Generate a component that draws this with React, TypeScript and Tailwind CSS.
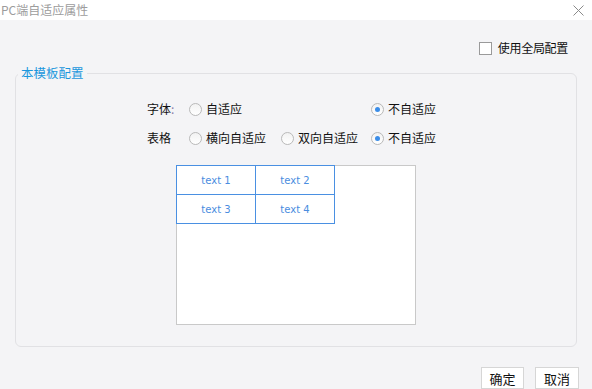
import React from "react";

const font = { fontFamily: '"Noto Sans CJK SC", "Liberation Sans", sans-serif' };

function Radio({ checked, label }: { checked?: boolean; label: string }) {
  return (
    <div className="flex items-center h-5">
      <span className="w-[13px] h-[13px] rounded-full border border-[#b9b9b9] bg-gradient-to-b from-[#f2f2f2] to-white flex items-center justify-center">
        {checked && <span className="w-[5px] h-[5px] rounded-full bg-[#3b8de8]" />}
      </span>
      <span className="ml-[4px] text-[12px] text-[#111] leading-none">{label}</span>
    </div>
  );
}

export default function App() {
  return (
    <div className="w-[592px] h-[389px] bg-[#f4f4f6] flex flex-col overflow-hidden" style={font}>
      <div className="h-5 bg-white flex items-center justify-between pl-[1px] pr-[8px]">
        <span className="text-[12px] text-[#9c9c9c] leading-none">PC端自适应属性</span>
        <svg width="11" height="11" viewBox="0 0 11 11" className="mt-[1px]">
          <path d="M0.5 0.5L10.5 10.5M10.5 0.5L0.5 10.5" stroke="#8a8a8a" strokeWidth="1" />
        </svg>
      </div>

      <div className="flex justify-end pr-[24px] mt-[20px] h-4 items-center">
        <span className="w-[13px] h-[13px] border border-[#9a9a9a] bg-white" />
        <span className="ml-[6px] text-[12px] text-[#111] leading-none tracking-[-0.3px]">使用全局配置</span>
      </div>

      <fieldset className="mx-[15px] mt-[9px] border border-[#e1e1e4] rounded-[6px] pb-[21px]">
        <legend className="ml-[2px] px-[3px] text-[12.5px] leading-4 text-[#1b97dd]">本模板配置</legend>
        <div className="pl-[131px] pt-[18px] grid grid-cols-[42px_92px_90px_auto] gap-y-[9px] items-center text-[12px] text-[#111]">
          <span className="leading-none">字体<span className="text-[#8b7fa8]">:</span></span>
          <div className="col-span-2"><Radio label="自适应" /></div>
          <Radio checked label="不自适应" />
          <span className="leading-none">表格</span>
          <Radio label="横向自适应" />
          <Radio label="双向自适应" />
          <Radio checked label="不自适应" />
        </div>
        <div className="ml-[160px] mt-[17px] w-[240px] h-[160px] bg-white border border-[#c9c9c9]">
          <table className="-ml-px -mt-px border-collapse" style={{ fontFamily: '"DejaVu Sans", sans-serif' }}>
            <tbody>
              {[["text 1", "text 2"], ["text 3", "text 4"]].map((row, i) => (
                <tr key={i}>
                  {row.map((c) => (
                    <td key={c} className="w-[79px] h-[29px] border border-[#4a90e2] text-center text-[10px] text-[#4a8de0] p-0">
                      {c}
                    </td>
                  ))}
                </tr>
              ))}
            </tbody>
          </table>
        </div>
      </fieldset>

      <div className="flex justify-end gap-[11px] pr-[13px] mt-[20px]">
        <button className="w-[43px] h-[22px] bg-white border border-[#d6d6d6] text-[13px] text-[#111] leading-none">确定</button>
        <button className="w-[44px] h-[22px] bg-white border border-[#d6d6d6] text-[13px] text-[#111] leading-none">取消</button>
      </div>
    </div>
  );
}
